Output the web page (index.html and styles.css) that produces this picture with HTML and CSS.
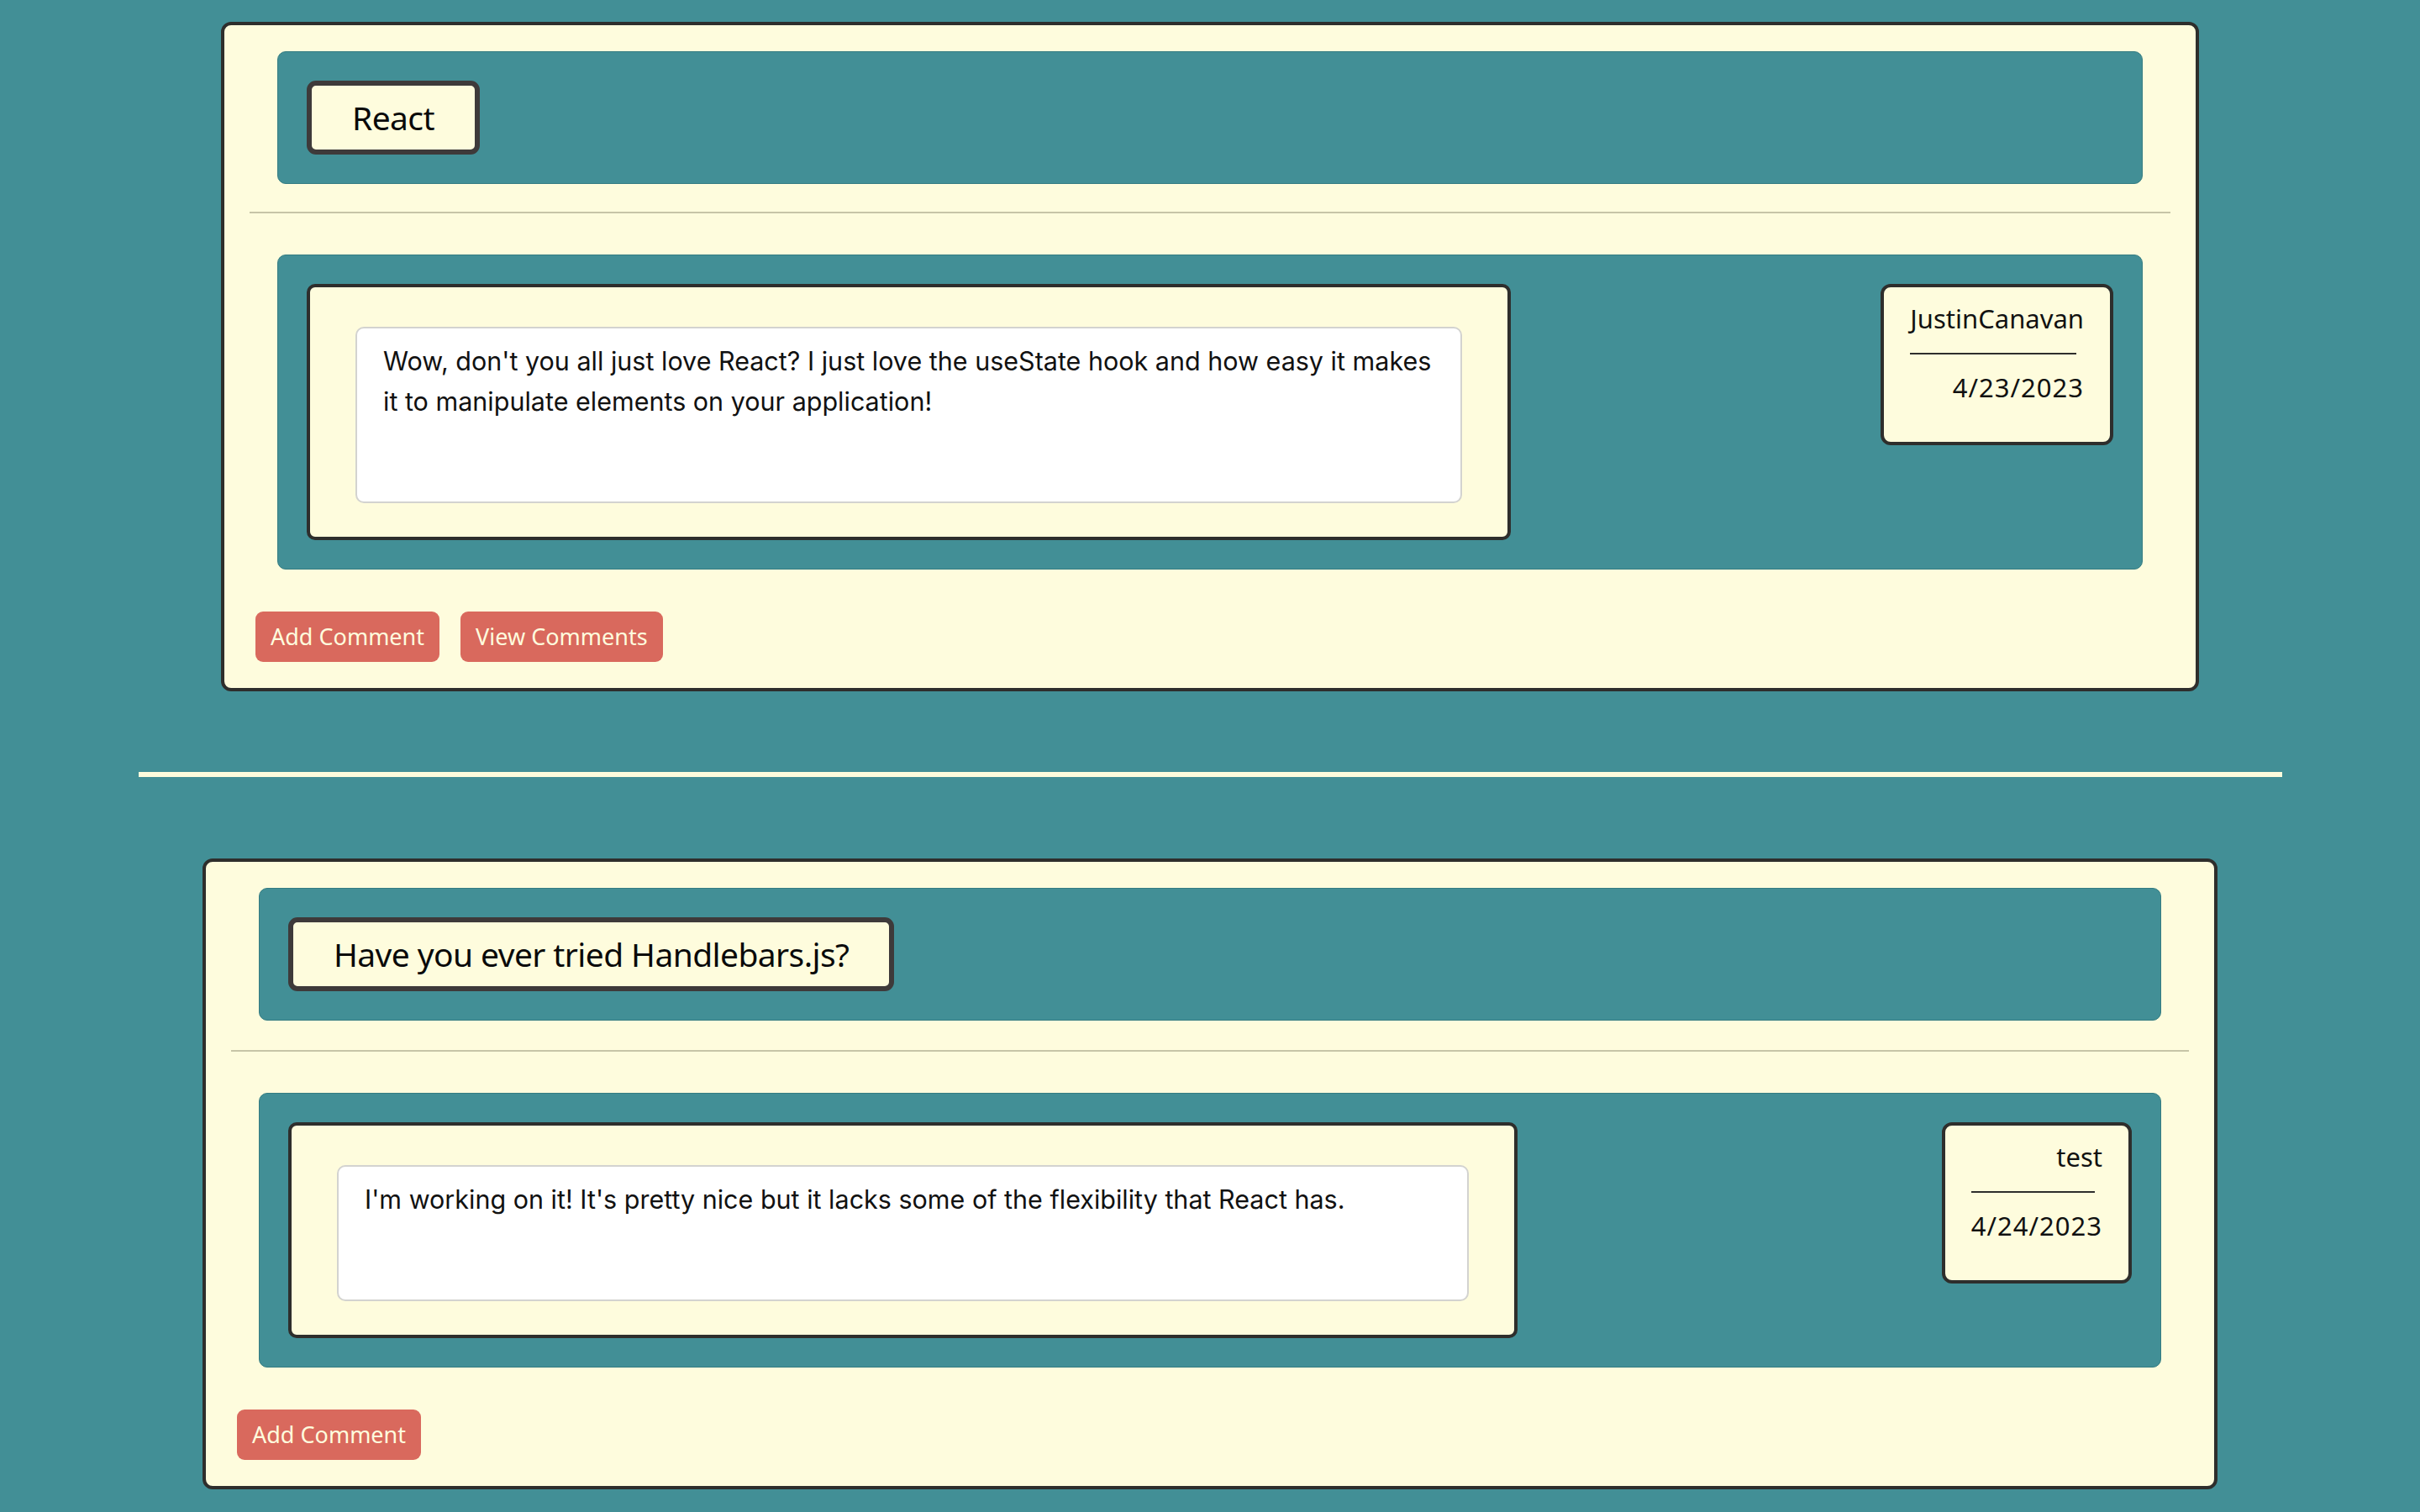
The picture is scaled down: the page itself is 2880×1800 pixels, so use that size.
FILE: index.html
```html
<!DOCTYPE html>
<html lang="en">
<head>
<meta charset="utf-8">
<title>Posts</title>
<link rel="stylesheet" href="styles.css">
</head>
<body>
<main class="feed">
  <article class="post post--react">
    <header class="title-box">
      <h2 class="title-pill">React</h2>
    </header>
    <hr class="post-divider">
    <section class="post-body">
      <div class="text-wrap">
        <div class="text-area">Wow, don't you all just love React? I just love the useState hook and how easy it makes it to manipulate elements on your application!</div>
      </div>
      <aside class="meta">
        <p class="meta-line">JustinCanavan</p>
        <hr class="meta-rule">
        <p class="meta-line meta-date">4/23/2023</p>
      </aside>
    </section>
    <div class="actions">
      <button class="btn" type="button">Add Comment</button>
      <button class="btn" type="button">View Comments</button>
    </div>
  </article>

  <hr class="feed-sep">

  <article class="post post--hbs">
    <header class="title-box">
      <h2 class="title-pill">Have you ever tried Handlebars.js?</h2>
    </header>
    <hr class="post-divider">
    <section class="post-body">
      <div class="text-wrap">
        <div class="text-area">I'm working on it! It's pretty nice but it lacks some of the flexibility that React has.</div>
      </div>
      <aside class="meta">
        <p class="meta-line">test</p>
        <hr class="meta-rule">
        <p class="meta-line meta-date">4/24/2023</p>
      </aside>
    </section>
    <div class="actions">
      <button class="btn" type="button">Add Comment</button>
    </div>
  </article>
</main>
</body>
</html>
```

FILE: styles.css
```css
* { box-sizing: border-box; }

html, body {
  margin: 0;
  padding: 0;
}

body {
  background: #428f96;
  font-family: "Noto Sans", "Open Sans", sans-serif;
  color: #111;
}

.feed {
  padding-top: 26px;
  display: flex;
  flex-direction: column;
  align-items: center;
}

.post {
  background: #fefcdd;
  border: 4px solid #2e2e2c;
  border-radius: 12px;
  padding: 31px 30px 31px;
}

.post--react { width: 2354px; }
.post--hbs { width: 2398px; }

.title-box {
  margin: 0 33px;
  padding: 34px;
  background: #428f96;
  border: 1px solid #347c82;
  border-radius: 10px;
  display: flex;
}

.title-pill {
  margin: 0;
  height: 88px;
  padding: 0 48px;
  border: 6px solid #3e3a3a;
  border-radius: 11px;
  background: #fefcdd;
  font-weight: 400;
  font-size: 39px;
  letter-spacing: -0.6px;
  line-height: 76px;
  color: #0a0a0a;
  white-space: nowrap;
}

.post-divider {
  margin: 33px 0 49px;
  border: 0;
  height: 2px;
  background: #c7c5a7;
}

.post--hbs .post-divider {
  margin-top: 35px;
}

.post-body {
  margin: 0 33px;
  padding: 34px;
  background: #428f96;
  border: 1px solid #347c82;
  border-radius: 10px;
  display: flex;
  justify-content: space-between;
  align-items: flex-start;
}

.text-wrap {
  width: 66.6667%;
  background: #fefcdd;
  border: 4px solid #2e2e2c;
  border-radius: 10px;
  padding: 47px 54px 40px;
}

.text-area {
  background: #fff;
  border: 2px solid #d3d3d0;
  border-radius: 10px;
  padding: 15px 31px 95px;
  font-family: "Inter", "Liberation Sans", sans-serif;
  font-size: 30.5px;
  line-height: 48px;
  color: #111;
}

.meta {
  background: #fefcdd;
  border: 4px solid #2e2e2c;
  border-radius: 12px;
  padding: 15px 31px 42px;
  text-align: right;
}

.meta-line {
  margin: 0;
  font-size: 31px;
  line-height: 45px;
  color: #111;
  white-space: nowrap;
}

.meta-date {
  letter-spacing: 1px;
}

.meta-rule {
  border: 0;
  height: 2px;
  background: #2e2e2c;
  margin: 18px 9px 17px 0;
}

.actions {
  margin-top: 50px;
  padding-left: 7px;
  display: flex;
  gap: 25px;
}

.btn {
  height: 60px;
  padding: 0 18px;
  border: 0;
  border-radius: 9px;
  background: #d9695d;
  color: #fefcdd;
  font-family: "Noto Sans", "Open Sans", sans-serif;
  font-size: 27px;
  line-height: 60px;
}

.feed-sep {
  width: 2551px;
  height: 6px;
  border: 0;
  margin: 96px 0 97px;
  background: #fefcdd;
}
```
